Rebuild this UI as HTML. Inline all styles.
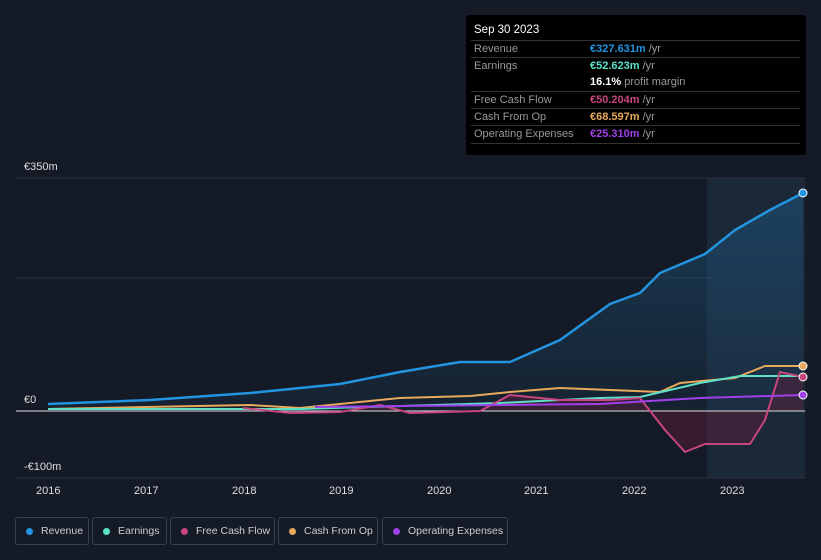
<!DOCTYPE html>
<html><head><meta charset="utf-8"><style>
html,body{margin:0;width:821px;height:560px;overflow:hidden}
body{background:#151b26;font-family:"Liberation Sans",sans-serif;position:relative;color:#ccc}
.tip{position:absolute;left:466px;top:15px;width:340px;height:140px;background:#000;border-radius:3px;font-size:11px}
.tip .h{position:absolute;left:8px;top:9px;color:#fff;font-size:11.5px}
.row{position:absolute;left:5px;width:329px;border-top:1px solid #333;height:17px;line-height:17px;white-space:nowrap}
.row span.l{position:absolute;left:3px;color:#999}
.row span.v{position:absolute;left:119px;color:#999}
.lg{position:absolute;top:517px;height:28px;border:1px solid #3a404b;border-radius:3px;font-size:10.5px;color:#ccc;line-height:26px;box-sizing:border-box;white-space:nowrap}
.lg i{position:absolute;left:10px;top:10px;width:7px;height:7px;border-radius:50%}
.lg span{position:absolute;left:25px}
.ax{position:absolute;font-size:11px;color:#ddd}
</style></head><body>
<svg width="821" height="560" style="position:absolute;left:0;top:0">
<defs><linearGradient id="g" x1="0" y1="0" x2="0" y2="1"><stop offset="0" stop-color="#1e5a86" stop-opacity=".5"/><stop offset="1" stop-color="#1e5a86" stop-opacity=".1"/></linearGradient></defs>
<rect x="707" y="178" width="98" height="300" fill="#1b2838"/>
<line x1="16" y1="178" x2="805" y2="178" stroke="#2c323c"/>
<line x1="16" y1="278" x2="805" y2="278" stroke="#2c323c"/>
<line x1="16" y1="478" x2="805" y2="478" stroke="#2c323c"/>
<path d="M48,404 L150,400 L250,393 L340,384 L400,372 L460,362 L510,362 L560,340 L610,304 L640,293 L660,273 L705,254 L735,230 L770,210 L803,193 L803,411 L48,411Z" fill="url(#g)"/>
<path d="M243,408 L290,413 L340,412 L380,405 L410,413 L480,411 L510,395 L560,400 L610,400 L640,398 L665,430 L685,452 L705,444 L750,444 L765,420 L780,372 L803,377 L803,411 L243,411Z" fill="#5a1e3a" opacity=".5"/>
<line x1="16" y1="411" x2="805" y2="411" stroke="#dddddd"/>
<polyline fill="none" stroke="#e8a95c" stroke-width="2" points="48,409 250,405 300,408 400,398 470,396 510,392 560,388 610,390 660,392 680,383 735,378 765,366 803,366"/>
<polyline fill="none" stroke="#5de0c8" stroke-width="2" points="48,409 300,409 500,403 600,398 640,397 700,383 740,376 803,376"/>
<polyline fill="none" stroke="#c8457e" stroke-width="2" points="243,408 290,413 340,412 380,405 410,413 480,411 510,395 560,400 610,400 640,398 665,430 685,452 705,444 750,444 765,420 780,372 803,377"/>
<polyline fill="none" stroke="#a040e8" stroke-width="2" points="315,407 500,405 600,404 700,398 803,395"/>
<polyline fill="none" stroke="#2394e0" stroke-width="2.5" points="48,404 150,400 250,393 340,384 400,372 460,362 510,362 560,340 610,304 640,293 660,273 705,254 735,230 770,210 803,193"/>
<circle cx="803" cy="193" r="4" fill="#2394e0" stroke="#fff"/>
<circle cx="803" cy="366" r="4" fill="#e8a95c" stroke="#fff"/>
<circle cx="803" cy="377" r="4" fill="#c8457e" stroke="#fff"/>
<circle cx="803" cy="395" r="4" fill="#a040e8" stroke="#fff"/>
</svg>
<div class="ax" style="left:24px;top:161px">€350m</div>
<div class="ax" style="left:24px;top:394px">€0</div>
<div class="ax" style="left:24px;top:461px">-€100m</div>
<div class="ax" style="left:36px;top:485px">2016</div>
<div class="ax" style="left:134px;top:485px">2017</div>
<div class="ax" style="left:232px;top:485px">2018</div>
<div class="ax" style="left:329px;top:485px">2019</div>
<div class="ax" style="left:427px;top:485px">2020</div>
<div class="ax" style="left:524px;top:485px">2021</div>
<div class="ax" style="left:622px;top:485px">2022</div>
<div class="ax" style="left:720px;top:485px">2023</div>
<div class="tip"><div class="h">Sep 30 2023</div>
<div class="row" style="top:25px"><span class="l">Revenue</span><span class="v"><b style="color:#2394e0">€327.631m</b> /yr</span></div>
<div class="row" style="top:42px"><span class="l">Earnings</span><span class="v"><b style="color:#5de0c8">€52.623m</b> /yr</span></div>
<div class="row" style="top:59px;border:0"><span class="v"><b style="color:#fff">16.1%</b> profit margin</span></div>
<div class="row" style="top:76px"><span class="l">Free Cash Flow</span><span class="v"><b style="color:#c8457e">€50.204m</b> /yr</span></div>
<div class="row" style="top:93px"><span class="l">Cash From Op</span><span class="v"><b style="color:#e8a95c">€68.597m</b> /yr</span></div>
<div class="row" style="top:110px"><span class="l">Operating Expenses</span><span class="v"><b style="color:#a040e8">€25.310m</b> /yr</span></div>
<div class="row" style="top:128px;height:0"></div>
</div>
<div class="lg" style="left:15px;width:74px"><i style="background:#2394e0"></i><span>Revenue</span></div>
<div class="lg" style="left:92px;width:75px"><i style="background:#5de0c8"></i><span>Earnings</span></div>
<div class="lg" style="left:170px;width:105px"><i style="background:#c8457e"></i><span>Free Cash Flow</span></div>
<div class="lg" style="left:278px;width:100px"><i style="background:#e8a95c"></i><span>Cash From Op</span></div>
<div class="lg" style="left:382px;width:126px"><i style="background:#a040e8"></i><span>Operating Expenses</span></div>
</body></html>
